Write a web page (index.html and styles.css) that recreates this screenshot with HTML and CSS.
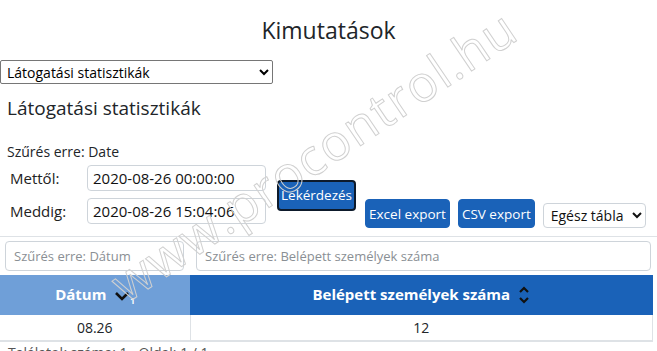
FILE: index.html
```html
<!DOCTYPE html>
<html lang="hu">
<head>
  <meta charset="UTF-8">
  <title>Kimutatások</title>
  <link rel="stylesheet" href="styles.css">
</head>
<body>
  <div class="page">
    <h2 class="title">Kimutatások</h2>
    <select class="report-select">
      <option>Látogatási statisztikák</option>
    </select>
    <h3 class="report-title">Látogatási statisztikák</h3>

    <div class="filter-label">Szűrés erre: Date</div>
    <div class="toolbar">
      <div class="dates">
        <label>Mettől:</label>
        <input type="text" value="2020-08-26 00:00:00">
        <label>Meddig:</label>
        <input type="text" value="2020-08-26 15:04:06">
      </div>
      <button class="btn btn-query">Lekérdezés</button>
      <button class="btn">Excel export</button>
      <button class="btn">CSV export</button>
      <select class="scope-select">
        <option>Egész tábla</option>
      </select>
    </div>

    <div class="table-wrap">
      <div class="col-filters">
        <input class="f-date" type="text" placeholder="Szűrés erre: Dátum">
        <input class="f-count" type="text" placeholder="Szűrés erre: Belépett személyek száma">
      </div>
      <table>
        <thead>
          <tr>
            <th class="sorted">Dátum
              <svg class="sort-icon" width="16" height="12" viewBox="0 0 16 12"><path d="M2 3l6 6 6-6" fill="none" stroke="#111" stroke-width="2.6"/></svg><sub>1</sub>
            </th>
            <th>Belépett személyek száma
              <svg class="sort-icon" width="12" height="22" viewBox="0 0 12 22"><path d="M2 8l4-4 4 4M2 14l4 4 4-4" fill="none" stroke="#111" stroke-width="2.2"/></svg>
            </th>
          </tr>
        </thead>
        <tbody>
          <tr><td>08.26</td><td>12</td></tr>
        </tbody>
      </table>
      <div class="pager">Találatok száma: 1 &middot; Oldal: 1 / 1</div>
    </div>
  </div>

  <div class="watermark">www.procontrol.hu</div>
</body>
</html>
```

FILE: styles.css
```css
* {
  box-sizing: border-box;
}

body {
  margin: 0;
  font-family: "Open Sans", "Noto Sans", sans-serif;
  color: #212529;
  background: #fff;
  overflow: hidden;
}

.page {
  height: 351px;
  overflow: hidden;
}

.title {
  margin: 14px 0 0;
  text-align: center;
  font-size: 23px;
  font-weight: 400;
  line-height: 32px;
}

.report-select {
  display: block;
  margin-top: 14px;
  width: 273px;
  height: 24px;
  font-family: inherit;
  font-size: 14px;
  color: #000;
  border: 1px solid #767676;
  border-radius: 2px;
  background: #fff;
  padding: 0 2px;
}

.report-title {
  margin: 10px 0 0 7px;
  font-size: 19px;
  font-weight: 400;
  line-height: 28px;
}

.filter-label {
  margin: 20px 0 3px 7px;
  font-size: 14px;
  line-height: 20px;
}

.toolbar {
  display: flex;
  align-items: flex-end;
  padding-bottom: 8px;
  border-bottom: 1px solid #dee2e6;
}

.dates {
  display: grid;
  grid-template-columns: 77px 179px;
  row-gap: 7px;
  margin: 0 0 4px 10px;
  align-items: center;
}

.dates label {
  font-size: 15px;
  color: #222;
}

.dates input {
  height: 26px;
  font-family: inherit;
  font-size: 15px;
  color: #111;
  border: 1px solid #ced4da;
  border-radius: 4px;
  padding: 0 5px;
}

.btn {
  height: 29px;
  margin-left: 8px;
  padding: 0 3px;
  font-family: inherit;
  font-size: 13.5px;
  line-height: 20px;
  white-space: nowrap;
  color: #fff;
  background: #1a62b8;
  border: 1px solid #1a62b8;
  border-radius: 4px;
}

.btn-query {
  margin: 0 1px 17px 11px;
  height: 31px;
  padding: 0 2px 2px;
  border: 2px solid #0d1a2b;
}

.scope-select {
  height: 25px;
  margin-left: 8px;
  width: 103px;
  font-family: inherit;
  font-size: 14px;
  color: #111;
  border: 1px solid #ced4da;
  border-radius: 4px;
  background: #fff;
  padding: 0 3px;
}

.table-wrap {
  width: 653px;
}

.col-filters {
  display: flex;
  padding: 4px 2px 4px 5px;
  gap: 12px;
}

.col-filters input {
  height: 30px;
  font-family: inherit;
  font-size: 13px;
  border: 1px solid #ced4da;
  border-radius: 4px;
  padding: 0 8px;
}

.col-filters input::placeholder {
  color: #8a8f94;
}

.f-date {
  width: 179px;
}

.f-count {
  flex: 1;
}

table {
  width: 100%;
  border-collapse: collapse;
  font-size: 14px;
}

th {
  height: 40px;
  color: #fff;
  background: #1a62b8;
  font-weight: 700;
  font-size: 15px;
  text-align: center;
}

th.sorted {
  width: 190px;
  background: #6f9fd8;
}

.sort-icon {
  vertical-align: middle;
  margin-left: 4px;
}

sub {
  font-size: 8px;
}

td {
  height: 26px;
  text-align: center;
  border-bottom: 2px solid #dee2e6;
  border-right: 1px solid #dee2e6;
}

.pager {
  margin: 1px 0 0 8px;
  font-size: 14px;
  line-height: 20px;
  color: #555;
}

.watermark {
  position: absolute;
  left: 116px;
  top: 258px;
  line-height: 60px;
  transform: rotate(-34deg);
  transform-origin: left center;
  font-size: 50px;
  letter-spacing: 1.5px;
  color: transparent;
  -webkit-text-stroke: 1px #d0d0d0;
  white-space: nowrap;
  pointer-events: none;
}
```
